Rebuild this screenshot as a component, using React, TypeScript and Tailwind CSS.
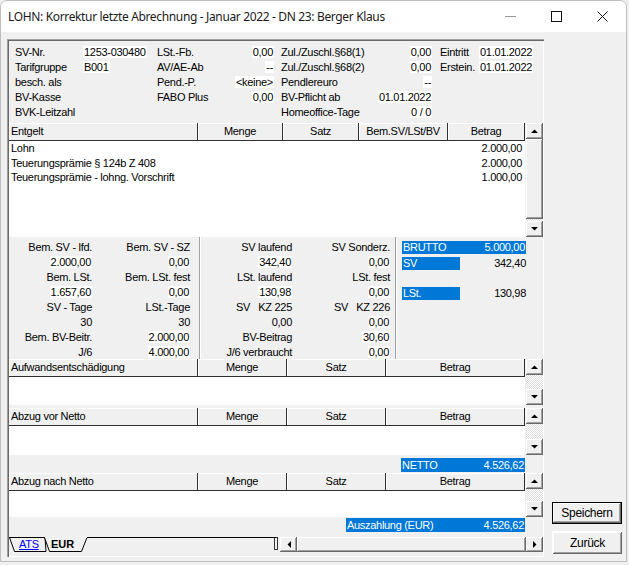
import React from "react"

const raised =
  "bg-[#f0f0f0] shadow-[inset_-1px_-1px_0_#696969,inset_1px_1px_0_#ffffff,inset_-2px_-2px_0_#a0a0a0]"

function Arrow({ dir }: { dir: "up" | "down" | "left" | "right" }) {
  const pts =
    dir === "up" ? "0,4 7,4 3.5,0.5" : dir === "down" ? "0,0 7,0 3.5,3.5" : dir === "left" ? "4,0 4,7 0.5,3.5" : "0,0 0,7 3.5,3.5"
  const w = dir === "up" || dir === "down" ? 7 : 4
  const h = dir === "up" || dir === "down" ? 4 : 7
  return (
    <svg width={w} height={h} viewBox={`0 0 ${w} ${h}`}>
      <polygon points={pts} fill="#000" />
    </svg>
  )
}

function ArrowBtn({ dir, h = 16 }: { dir: "up" | "down" | "left" | "right"; h?: number }) {
  return (
    <div className={`${raised} flex items-center justify-center w-[17px] shrink-0`} style={{ height: h }}>
      <Arrow dir={dir} />
    </div>
  )
}

function Dither({ h }: { h: number }) {
  return <div className="w-[17px] [background:repeating-conic-gradient(#ffffff_0_25%,#dcdcdc_0_50%)_0_0/2px_2px]" style={{ height: h }} />
}

function HeadCell({ w, children, left }: { w: number; children: React.ReactNode; left?: boolean }) {
  return (
    <div
      className={`h-full flex items-center bg-[#f0f0f0] border-r border-b border-[#303030] shadow-[inset_1px_1px_0_#ffffff] ${left ? "pl-[2px]" : "justify-center"}`}
      style={{ width: w }}
    >
      {children}
    </div>
  )
}

function V({ children }: { children: React.ReactNode }) {
  return <span className="bg-white px-[1px]">{children}</span>
}

function SmallTable({ title, body }: { title: string; body: number }) {
  return (
    <div className="flex">
      <div className="w-[516px]">
        <div className="flex h-[18px]">
          <HeadCell w={189} left>{title}</HeadCell>
          <HeadCell w={89}>Menge</HeadCell>
          <HeadCell w={99}>Satz</HeadCell>
          <HeadCell w={139}>Betrag</HeadCell>
        </div>
        <div className="bg-white" style={{ height: body }} />
      </div>
      <div className="ml-[1px] flex flex-col">
        <ArrowBtn dir="up" />
        <Dither h={18 + body - 32} />
        <ArrowBtn dir="down" />
      </div>
    </div>
  )
}

export default function App() {
  const font = "font-['Liberation_Sans',Arial,sans-serif] text-[11px] tracking-[-0.3px] text-black"
  return (
    <div className="w-[629px] h-[565px] bg-[#f0f0f0] overflow-hidden">
      <div className="w-[627px] h-[562px] flex flex-col border border-[#bdbdbd] rounded-t-[7px] overflow-hidden bg-[#f0f0f0]">
        {/* title bar */}
        <div className="h-[31px] shrink-0 bg-white flex items-center pl-[7px] font-['Noto_Sans',sans-serif] text-[12px] tracking-[-0.35px] text-[#1a1a1a]">
          <span className="flex-1">LOHN: Korrektur letzte Abrechnung - Januar 2022 - DN 23: Berger Klaus</span>
          <div className="w-[46px] flex justify-center">
            <svg width="11" height="11" viewBox="0 0 11 11"><line x1="0" y1="5.5" x2="11" y2="5.5" stroke="#999" /></svg>
          </div>
          <div className="w-[46px] flex justify-center">
            <svg width="11" height="11" viewBox="0 0 11 11"><rect x="0.5" y="0.5" width="10" height="10" fill="none" stroke="#111" /></svg>
          </div>
          <div className="w-[46px] flex justify-center mr-[1px]">
            <svg width="11" height="11" viewBox="0 0 11 11"><path d="M0.5 0.5 L10.5 10.5 M10.5 0.5 L0.5 10.5" stroke="#111" /></svg>
          </div>
        </div>

        <div className={`flex flex-1 ${font}`}>
          {/* main panel */}
          <div className="ml-[6px] mt-[7px] w-[537px] h-[518px] pl-[2px] pt-[2px] pr-[1px] pb-[1px] shadow-[inset_1px_1px_0_#a0a0a0,inset_2px_2px_0_#696969,inset_-1px_-1px_0_#ffffff] flex flex-col">
            {/* top info */}
            <div className="h-[82px] pt-[4px] pl-[6px] grid grid-cols-[68px_74px_70px_47px_103px_55px_47px_54px] auto-rows-[15px] leading-[15px] whitespace-nowrap">
              <span>SV-Nr.</span><span><V>1253-030480</V></span><span>LSt.-Fb.</span><span className="text-right"><V>0,00</V></span>
              <span className="pl-[7px]">Zul./Zuschl.§68(1)</span><span className="text-right"><V>0,00</V></span><span className="pl-[8px]">Eintritt</span><span><V>01.01.2022</V></span>

              <span>Tarifgruppe</span><span><V>B001</V></span><span>AV/AE-Ab</span><span className="text-right"><V>--</V></span>
              <span className="pl-[7px]">Zul./Zuschl.§68(2)</span><span className="text-right"><V>0,00</V></span><span className="pl-[8px]">Erstein.</span><span><V>01.01.2022</V></span>

              <span>besch. als</span><span></span><span>Pend.-P.</span><span className="text-right"><V>&lt;keine&gt;</V></span>
              <span className="pl-[7px]">Pendlereuro</span><span className="text-right"><V>--</V></span><span></span><span></span>

              <span>BV-Kasse</span><span></span><span>FABO Plus</span><span className="text-right"><V>0,00</V></span>
              <span className="pl-[7px]">BV-Pflicht ab</span><span className="text-right"><V>01.01.2022</V></span><span></span><span></span>

              <span>BVK-Leitzahl</span><span></span><span></span><span></span>
              <span className="pl-[7px]">Homeoffice-Tage</span><span className="text-right"><V>0 / 0</V></span><span></span><span></span>
            </div>

            {/* Entgelt grid */}
            <div className="flex">
              <div className="w-[516px]">
                <div className="flex h-[18px]">
                  <HeadCell w={189} left>Entgelt</HeadCell>
                  <HeadCell w={85}>Menge</HeadCell>
                  <HeadCell w={76}>Satz</HeadCell>
                  <HeadCell w={89}>Bem.SV/LSt/BV</HeadCell>
                  <HeadCell w={77}>Betrag</HeadCell>
                </div>
                <div className="h-[96px] bg-white leading-[14.5px]">
                  {[
                    ["Lohn", "2.000,00"],
                    ["Teuerungsprämie § 124b Z 408", "2.000,00"],
                    ["Teuerungsprämie - lohng. Vorschrift", "1.000,00"],
                  ].map(([a, b]) => (
                    <div key={a} className="flex justify-between pl-[2px] pr-[3px]">
                      <span>{a}</span>
                      <span>{b}</span>
                    </div>
                  ))}
                </div>
              </div>
              <div className="ml-[1px] flex flex-col h-[114px]">
                <ArrowBtn dir="up" />
                <div className={`${raised} w-[17px] h-[80px]`} />
                <Dither h={2} />
                <ArrowBtn dir="down" />
              </div>
            </div>

            {/* summary */}
            <div className="flex h-[122px]">
              <div className="w-[190px] pt-[3px] grid grid-cols-[83px_98px] auto-rows-[15px] leading-[15px] text-right whitespace-nowrap">
                <span>Bem. SV - lfd.</span><span>Bem. SV - SZ</span>
                <span><V>2.000,00</V></span><span><V>0,00</V></span>
                <span>Bem. LSt.</span><span>Bem. LSt. fest</span>
                <span><V>1.657,60</V></span><span><V>0,00</V></span>
                <span>SV - Tage</span><span>LSt.-Tage</span>
                <span>30</span><span>30</span>
                <span>Bem. BV-Beitr.</span><span><V>2.000,00</V></span>
                <span>J/6</span><span><V>4.000,00</V></span>
              </div>
              <div className="w-[2px] border-l border-[#a0a0a0] bg-white" />
              <div className="w-[194px] pt-[3px] grid grid-cols-[91px_98px] auto-rows-[15px] leading-[15px] text-right whitespace-nowrap">
                <span>SV laufend</span><span>SV Sonderz.</span>
                <span><V>342,40</V></span><span><V>0,00</V></span>
                <span>LSt. laufend</span><span>LSt. fest</span>
                <span><V>130,98</V></span><span><V>0,00</V></span>
                <span className="whitespace-pre">SV   KZ 225</span><span className="whitespace-pre">SV   KZ 226</span>
                <span>0,00</span><span><V>0,00</V></span>
                <span>BV-Beitrag</span><span><V>30,60</V></span>
                <span>J/6 verbraucht</span><span><V>0,00</V></span>
              </div>
              <div className="w-[2px] border-l border-[#a0a0a0] bg-white" />
              <div className="w-[129px] pl-[5px] pt-[4px] flex flex-col leading-[13px]">
                <div className="h-[13px] bg-[#0078d7] text-white flex justify-between px-[1px]">
                  <span>BRUTTO</span>
                  <span>5.000,00</span>
                </div>
                <div className="h-[15px] mt-[2px] flex justify-between items-center">
                  <span className="w-[58px] h-[13px] bg-[#0078d7] text-white px-[1px]">SV</span>
                  <span>342,40</span>
                </div>
                <div className="h-[15px]" />
                <div className="h-[15px] flex justify-between items-center">
                  <span className="w-[58px] h-[13px] bg-[#0078d7] text-white px-[1px]">LSt.</span>
                  <span>130,98</span>
                </div>
              </div>
            </div>

            {/* Aufwandsentschädigung */}
            <SmallTable title="Aufwandsentschädigung" body={28} />
            <div className="h-[3px]" />
            <SmallTable title="Abzug vor Netto" body={29} />
            <div className="h-[17px] flex">
              <div className="w-[516px] flex justify-end items-end">
                <div className="w-[124px] h-[14px] leading-[14px] bg-[#0078d7] text-white flex justify-between px-[1px]">
                  <span>NETTO</span>
                  <span>4.526,62</span>
                </div>
              </div>
            </div>
            <div className="h-[1px]" />
            <SmallTable title="Abzug nach Netto" body={26} />
            <div className="h-[20px] flex">
              <div className="w-[516px] flex justify-end pt-[1px]">
                <div className="w-[179px] h-[14px] leading-[14px] bg-[#0078d7] text-white flex justify-between px-[1px]">
                  <span>Auszahlung (EUR)</span>
                  <span>4.526,62</span>
                </div>
              </div>
            </div>

            {/* tabs + horizontal scrollbar */}
            <div className="flex h-[16px] items-start">
              <div className="relative w-[267px] h-[16px]">
                <svg width="267" height="16" viewBox="0 0 267 16" className="absolute left-0 top-0">
                  <line x1="0" y1="0.5" x2="36" y2="0.5" stroke="#000" />
                  <line x1="78" y1="0.5" x2="267" y2="0.5" stroke="#000" />
                  <polygon points="0.5,0.5 5.5,14.5 37,14.5 36,0.5" fill="#f0f0f0" stroke="#000" />
                  <polygon points="35.5,0.5 40.5,14.5 72.5,14.5 78,0.5" fill="#f0f0f0" stroke="#000" />
                  <line x1="36" y1="0.5" x2="78" y2="0.5" stroke="#f0f0f0" />
                </svg>
                <span className="absolute left-[10px] top-[0px] leading-[14px] text-[#0000ff] underline">ATS</span>
                <span className="absolute left-[42px] top-[0px] leading-[14px] font-bold tracking-[0px]">EUR</span>
              </div>
              <div className="w-[4px] h-[13px] ml-[1px] border border-[#303030] bg-[#f0f0f0]" />
              <div className="ml-[2px] flex">
                <ArrowBtn dir="left" h={15} />
                <div className={`${raised} w-[229px] h-[15px]`} />
                <ArrowBtn dir="right" h={15} />
              </div>
            </div>
          </div>

          {/* right buttons */}
          <div className="flex-1 flex flex-col items-start pl-[8px] pt-[470px] font-['Liberation_Sans',Arial,sans-serif] text-[12px]">
            <div className="w-[70px] h-[22px] border border-[#000]">
              <div className={`${raised} w-full h-full flex items-center justify-center`}>Speichern</div>
            </div>
            <div className={`${raised} mt-[7px] w-[70px] h-[23px] flex items-center justify-center border-t border-l border-white`}>Zurück</div>
          </div>
        </div>
      </div>
    </div>
  )
}
